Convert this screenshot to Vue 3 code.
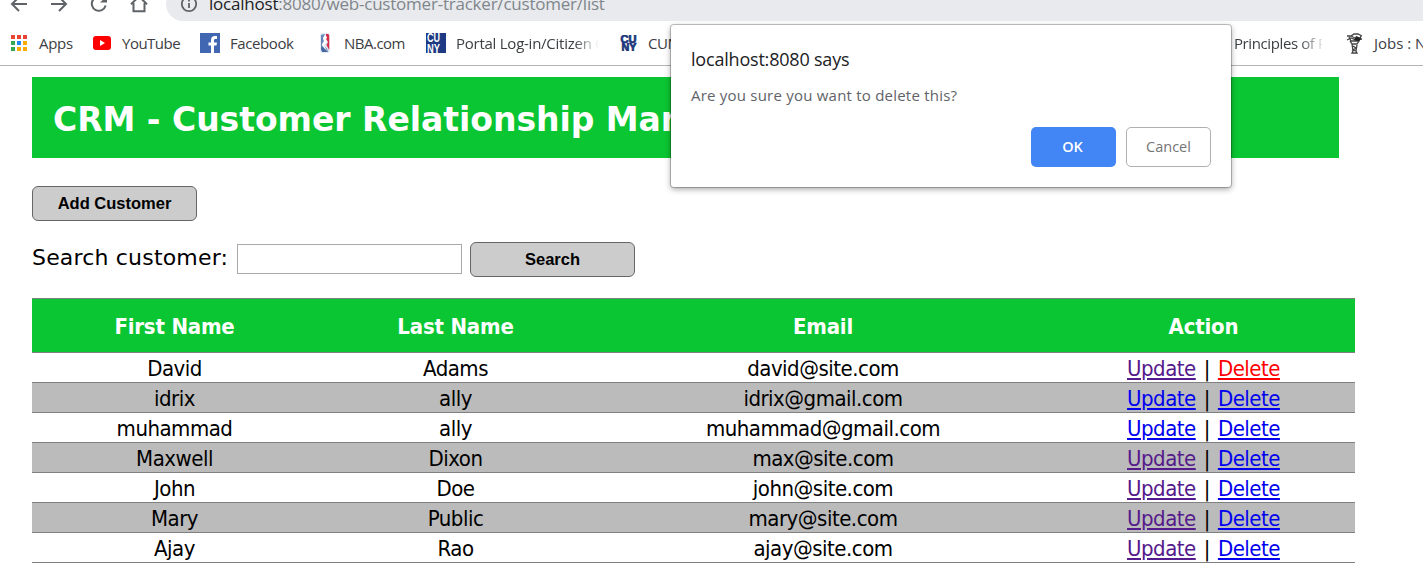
<script setup>
const columns = ['First Name', 'Last Name', 'Email', 'Action']
const customers = [
  { first: 'David', last: 'Adams', email: 'david@site.com', visited: true, active: true },
  { first: 'idrix', last: 'ally', email: 'idrix@gmail.com' },
  { first: 'muhammad', last: 'ally', email: 'muhammad@gmail.com' },
  { first: 'Maxwell', last: 'Dixon', email: 'max@site.com', visited: true },
  { first: 'John', last: 'Doe', email: 'john@site.com', visited: true },
  { first: 'Mary', last: 'Public', email: 'mary@site.com', visited: true },
  { first: 'Ajay', last: 'Rao', email: 'ajay@site.com', visited: true },
]
const dots = ['#ea4335', '#ea4335', '#ea4335', '#34a853', '#1e88f5', '#fbab05', '#34a853', '#fbab05', '#fbab05']
</script>

<template>
  <div class="window">
    <header class="toolbar">
      <svg class="nav" width="166" height="21" viewBox="0 0 166 21" fill="none" stroke="#5f6368" stroke-width="2">
        <path d="M27 4H12M19 -3L12 4L19 11" />
        <path d="M51 4H66M59 -3L66 4L59 11" />
        <path d="M105.6 5.5A7 7 0 1 1 104 -1" />
        <path d="M100 2.5H107V-4Z" fill="#5f6368" stroke="none" />
        <path d="M131 4.2L139 -3.5L147 4.2M133.500 3V11.200H144.500V3" />
      </svg>
      <div class="omnibox">
        <svg width="18" height="18" viewBox="0 0 18 18" fill="none" stroke="#5f6368" stroke-width="1.8">
          <circle cx="9" cy="9" r="7.2" />
          <path d="M9 8V13M9 4.800V6.500" />
        </svg>
        <span class="url"><b>localhost</b>:8080/web-customer-tracker/customer/list</span>
      </div>
    </header>

    <nav class="bookmarks">
      <a class="bm apps">
        <span class="dots"><i v-for="(c, i) in dots" :key="i" :style="{ background: c }"></i></span>
        <span class="t1">Apps</span>
      </a>
      <a class="bm youtube">
        <svg width="18" height="14" viewBox="0 0 18 14"><rect width="18" height="14" rx="3" fill="#f00" /><path d="M7 4V10L12 7Z" fill="#fff" /></svg>
        <span class="t2">YouTube</span>
      </a>
      <a class="bm facebook">
        <svg width="20" height="20" viewBox="0 0 20 20"><rect width="20" height="20" fill="#4267b2" /><path d="M11 20V12.500H8.500V9.500H11V7.200C11 4.500 12.500 3.100 15 3.100H17V6H15.500C14.300 6 14 6.600 14 7.500V9.500H17L16.500 12.500H14V20Z" fill="#fff" /></svg>
        <span class="t3">Facebook</span>
      </a>
      <a class="bm nba">
        <svg width="10" height="20" viewBox="0 0 10 20"><rect x=".3" y=".3" width="9.400" height="19.400" rx="2" fill="#dce3f0" /><path d="M1 2L5 1L3 5L4 8L2 11L3 14L1 18Z" fill="#6685b8" /><path d="M6 1H8.500L9.200 3V17L6.500 12L8 9L6 6Z" fill="#d92b45" /><path d="M1 15L4 13L7 16L8 19H2Z" fill="#45679f" /><path d="M5 2L7 4L6 7L7 9L4 12L6 16L8 19L4 15L2 12L4 8L3 5Z" fill="#fff" /></svg>
        <span class="t4">NBA.com</span>
      </a>
      <a class="bm portal">
        <svg class="mark" width="20" height="20" viewBox="0 0 20 20"><rect width="20" height="20" fill="#1d3a83" /><text x="1" y="9.200" textLength="13" lengthAdjust="spacingAndGlyphs" fill="#fff">CU</text><text x="1" y="19.800" textLength="13" lengthAdjust="spacingAndGlyphs" fill="#fff">NY</text></svg>
        <span class="t5">Portal Log-in/Citizen C</span>
      </a>
      <a class="bm cuny">
        <svg class="mark small" width="18" height="16" viewBox="0 0 18 16" fill="#1c347c" stroke="#1c347c" stroke-width=".7"><text x=".5" y="8" textLength="16" lengthAdjust="spacingAndGlyphs">CU</text><text x="1.500" y="15.500" textLength="15" lengthAdjust="spacingAndGlyphs">NY</text></svg>
        <span class="t6">CUNY</span>
      </a>
      <a class="bm principles"><span class="t7">Principles of P</span></a>
      <a class="bm jobs">
        <svg width="17" height="21" viewBox="0 0 17 21" fill="none" stroke="#444" stroke-width="1.300"><path d="M1 3L5 3L8 1H12L16 3M1 7L5 5L10 7L16 6M3 4L5 8L13 8L15 3M4 8L6 11H11L13 8M6 11L7 18L6 20H11L10 18L11 12M7 13L10 15L7 17L10 18M5 3L9 5" /><path d="M10 3L15 5L13 8L8 7Z" fill="#222" stroke="none" /></svg>
        <span class="t8">Jobs : NYC</span>
      </a>
    </nav>

    <main class="page">
      <h1><span>CRM - Customer Relationship Manager</span></h1>
      <button class="btn add"><span>Add Customer</span></button>
      <form class="search" @submit.prevent>
        <label>Search customer:</label>
        <input type="text" />
        <button class="btn"><span>Search</span></button>
      </form>
      <table>
        <colgroup><col class="c1" /><col class="c2" /><col class="c3" /><col class="c4" /></colgroup>
        <thead>
          <tr><th v-for="c in columns" :key="c">{{ c }}</th></tr>
        </thead>
        <tbody>
          <tr v-for="c in customers" :key="c.email">
            <td>{{ c.first }}</td>
            <td>{{ c.last }}</td>
            <td>{{ c.email }}</td>
            <td class="links"><a :class="{ visited: c.visited }">Update</a> | <a :class="{ active: c.active }">Delete</a></td>
          </tr>
        </tbody>
      </table>
    </main>

    <div class="dialog">
      <div class="title"><span>localhost:8080 says</span></div>
      <p><span>Are you sure you want to delete this?</span></p>
      <div class="actions">
        <button class="ok">OK</button>
        <button class="cancel">Cancel</button>
      </div>
    </div>
  </div>
</template>

<style>
html, body { margin: 0; background: #fff; overflow: hidden; }
</style>

<style scoped>
* { box-sizing: border-box; }
.window { position: relative; width: 1423px; height: 580px; overflow: hidden; background: #fff; color: #000; }
svg { display: block; flex: none; }
button { margin: 0; padding: 0; }

.toolbar { display: flex; height: 21px; }
.omnibox { flex: 1; display: flex; align-items: center; height: 34px; margin-top: -13px; padding-left: 14px; background: #e8eaed; border-radius: 17px 0 0 17px; }
.url { margin-left: 11px; font: 17px/24px "Open Sans", sans-serif; letter-spacing: -0.22px; color: #80868b; white-space: nowrap; }
.url b { font-weight: 400; color: #202124; }

.bookmarks { display: flex; height: 45px; border-bottom: 1px solid #b3b4b6; font: 15px/20px "Open Sans", sans-serif; letter-spacing: -0.4px; color: #3c4043; }
.bm { display: flex; align-items: center; flex: none; overflow: hidden; white-space: nowrap; }
.apps { width: 82px; padding-left: 11px; }
.youtube { width: 107px; padding-left: 11px; }
.facebook { width: 131px; padding-left: 11px; }
.nba { width: 95px; }
.portal { width: 195px; padding-left: 11px; }
.cuny { width: 614px; padding-left: 10px; }
.principles { width: 122px; padding-left: 10px; }
.jobs { width: 77px; }
.mark text { font: bold 12px "Liberation Sans", sans-serif; letter-spacing: 0; }
.mark.small text { font-size: 10px; }
.dots { display: grid; grid-template-columns: repeat(3, 4px); grid-auto-rows: 4px; gap: 2px; width: 16px; }
.t1 { margin-left: 12px; letter-spacing: -0.3px; }
.t2 { margin-left: 11px; letter-spacing: -0.5px; }
.t3 { margin-left: 10px; }
.t4 { margin-left: 14px; letter-spacing: -0.5px; }
.t5 { margin-left: 10px; width: 143px; overflow: hidden; letter-spacing: -0.25px; mask-image: linear-gradient(90deg, #000 118px, transparent 143px); }
.t6 { margin-left: 10px; }
.t7 { width: 88px; overflow: hidden; mask-image: linear-gradient(90deg, #000 65px, transparent 92px); }
.t8 { margin-left: 11px; letter-spacing: 0; }

.page { padding: 11px 0 0 32px; }
h1 { display: flex; align-items: center; width: 1307px; height: 81px; margin: 0; padding: 5px 0 0 21px; background: #0bc633; color: #fff; font: bold 33px/40px "DejaVu Sans", sans-serif; letter-spacing: -0.03px; white-space: nowrap; }
.btn { display: block; width: 165px; height: 35px; padding-bottom: 2px; border: 1px solid #666; border-radius: 6px; background: #ccc; color: #000; font: bold 16.5px/20px "Liberation Sans", Arial, sans-serif; }
.add { margin-top: 28px; }
.search { display: flex; align-items: center; height: 35px; margin: 21px 0 0; }
label { width: 205px; font: 22px/28px "DejaVu Sans", sans-serif; letter-spacing: 0.18px; white-space: nowrap; margin-top: -4px; }
input { width: 225px; height: 30px; margin: -1px 8px 0 0; padding: 0 4px; border: 1px solid #a9a9a9; }
table { width: 1323px; margin-top: 21px; border-collapse: collapse; table-layout: fixed; font: 22px/26px "DejaVu Sans Condensed", "DejaVu Sans", sans-serif; font-stretch: condensed; letter-spacing: -0.5px; }
.c1 { width: 285px; }
.c2 { width: 277px; }
.c3 { width: 458px; }
.c4 { width: 303px; }
tr { height: 30px; border-top: 1px solid #808080; border-bottom: 1px solid #808080; }
thead tr { height: 54px; background: #0bc633; color: #fff; }
th, td { padding: 3px 0 0; text-align: center; white-space: nowrap; }
th { padding-top: 2px; letter-spacing: -0.2px; }
tbody tr:nth-child(even) { background: #bbb; }
.links { word-spacing: 2.2px; }
td a { color: #0000ee; text-decoration: underline; text-underline-offset: 2px; text-decoration-thickness: 2px; }
td a.visited { color: #551a8b; }
td a.active { color: #f00; }

.dialog { position: absolute; left: 671px; top: 25px; width: 560px; height: 162px; padding: 19px 20px 20px; background: #fff; border-radius: 3px; box-shadow: 0 0 0 1px rgba(0,0,0,.22), 0 2px 6px rgba(0,0,0,.38); font-family: "Open Sans", sans-serif; }
.title { font-size: 18px; line-height: 30px; letter-spacing: -0.2px; color: #202124; }
p { margin: 10px 0 0; font-size: 15px; line-height: 22px; letter-spacing: 0.22px; color: #5f6368; }
.actions { display: flex; justify-content: flex-end; gap: 10px; margin-top: 21px; }
.actions button { width: 85px; height: 40px; border-radius: 5px; font: 600 14.5px/20px "Open Sans", sans-serif; }
.actions .ok { padding-right: 2px; border: 0; background: #4285f4; color: #fff; }
.actions .cancel { border: 1px solid #aeb0b3; background: #fff; color: #757575; font-weight: 500; }
</style>
